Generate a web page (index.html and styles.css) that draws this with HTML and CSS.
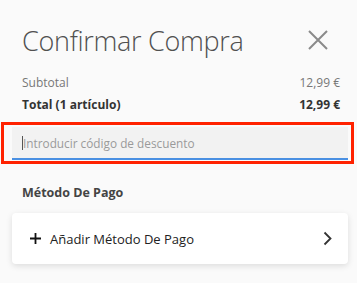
FILE: index.html
```html
<!DOCTYPE html>
<html lang="es">
<head>
<meta charset="utf-8">
<link rel="stylesheet" href="styles.css">
</head>
<body>
<div class="page">
  <div class="header">
    <h1 class="title">Confirmar Compra</h1>
    <svg class="close" width="22" height="22" viewBox="0 0 22 22"><path d="M2 2 L20 20 M20 2 L2 20" stroke="#8a8a8a" stroke-width="2" fill="none"/></svg>
  </div>
  <div class="row sub"><span>Subtotal</span><span>12,99 €</span></div>
  <div class="row total"><span>Total (1 artículo)</span><span>12,99 €</span></div>
  <div class="discount">
    <div class="input"><span class="caret"></span><span class="ph">Introducir código de descuento</span></div>
    <div class="highlight"></div>
  </div>
  <div class="section">Método De Pago</div>
  <div class="card">
    <div class="add">
      <svg width="11" height="11" viewBox="0 0 11 11"><path d="M5.5 0 V11 M0 5.5 H11" stroke="#111" stroke-width="1.8"/></svg>
      <span>Añadir Método De Pago</span>
    </div>
    <svg class="chev" width="9" height="15" viewBox="0 0 9 15"><path d="M1.5 1.5 L7.5 7.5 L1.5 13.5" stroke="#333" stroke-width="1.8" fill="none"/></svg>
  </div>
</div>
</body>
</html>
```
FILE: styles.css
```css
html, body { margin: 0; padding: 0; }
body {
  background: #fafafa;
  font-family: "Open Sans", "Noto Sans", sans-serif;
  width: 357px;
  height: 283px;
  overflow: hidden;
}
.page { padding: 20px 8px 0 12px; }
.header {
  display: flex;
  align-items: center;
  justify-content: space-between;
  padding: 0 20px 0 10px;
  height: 40px;
}
.title {
  margin: 0;
  font-size: 27px;
  font-weight: 300;
  color: #505050;
  letter-spacing: -0.3px;
}
.close { display: block; }
.row {
  display: flex;
  justify-content: space-between;
  padding: 0 9px 0 10px;
  font-size: 12px;
  height: 22px;
  align-items: center;
}
.sub { margin-top: 11px; color: #777; }
.total { color: #333; font-weight: 700; }
.discount { position: relative; margin-top: 12px; }
.input {
  background: #f2f2f2;
  height: 31px;
  border-bottom: 2px solid #4a90e2;
  display: flex;
  align-items: center;
  padding-left: 10px;
  margin-right: 1px;
}
.caret { width: 1px; height: 14px; background: #555; }
.ph { color: #9a9a9a; font-size: 11.8px; }
.highlight {
  position: absolute;
  left: -11px; top: -5px; right: -5px; bottom: -4px;
  border: 3px solid #ff2200;
}
.section {
  margin-top: 24px;
  padding-left: 10px;
  font-size: 12.5px;
  font-weight: 700;
  color: #444;
  line-height: 17px;
}
.card {
  margin-top: 12px;
  background: #fff;
  border-radius: 4px;
  box-shadow: 0 2px 6px rgba(0,0,0,0.12);
  height: 51px;
  display: flex;
  align-items: center;
  justify-content: space-between;
  padding: 0 16px 0 18px;
  margin-right: 1px;
}
.add { display: flex; align-items: center; gap: 9px; font-size: 13px; font-weight: 400; color: #222; }
.chev { display: block; }
```
